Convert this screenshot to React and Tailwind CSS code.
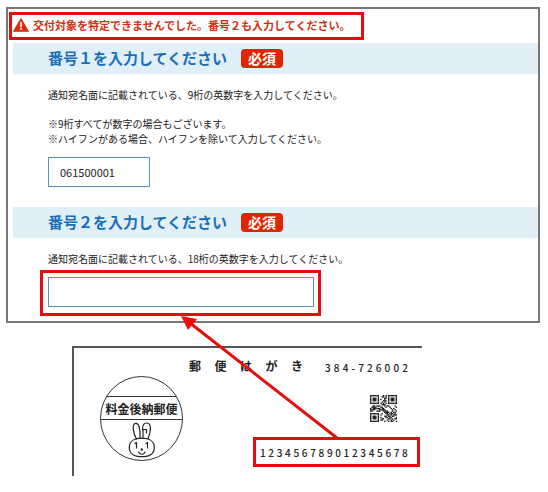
import React from "react";

const JP = "font-['Noto_Sans_CJK_JP',sans-serif]";

const QR_ROWS = [
  "111111100010101111111",
  "100000100110101000001",
  "101110100001101011101",
  "101110101001001011101",
  "101110100011101011101",
  "100000100101001000001",
  "111111101010101111111",
  "000000000111000000000",
  "001101110001011000010",
  "011110001100100100001",
  "101111110110000010100",
  "111100011111000001010",
  "110001110011110001001",
  "000000000001111010110",
  "111111100100110111010",
  "100000101000011010111",
  "101110100001101101100",
  "101110101000110110001",
  "101110100110001101011",
  "100000101100010010100",
  "111111100001001011001",
];

function RequiredBadge() {
  return (
    <span className="rounded bg-[#de2700] px-[7px] text-[14px]/[19px] font-bold text-white">必須</span>
  );
}

function SectionHeading({ id, children }) {
  return (
    <div className="ml-[5px] flex h-[31px] items-center gap-[14px] bg-[#e1eff8] pb-px pl-[35px]">
      <label htmlFor={id} className="text-[15px]/[20px] font-bold text-[#1a6fb8]">
        {children}
      </label>
      <RequiredBadge />
    </div>
  );
}

function SpacedText({ text, className }) {
  return (
    <p className={"flex justify-between " + className}>
      {text.split("").map((c, i) => (
        <span key={i}>{c}</span>
      ))}
    </p>
  );
}

function WarningIcon() {
  return (
    <svg viewBox="0 0 16 14" className="h-[14px] w-4 shrink-0" aria-hidden="true">
      <path d="M8 .8 15.3 13.2H.7Z" fill="#d32f10" stroke="#d32f10" strokeWidth="1.2" strokeLinejoin="round" />
      <path d="M8 4.6v4.2" stroke="#fff" strokeWidth="1.5" strokeLinecap="round" />
      <circle cx="8" cy="11" r=".9" fill="#fff" />
    </svg>
  );
}

function Stamp() {
  return (
    <div className="relative h-[85px] w-[83px] pt-6">
      <svg viewBox="0 0 83 85" className="absolute inset-0 size-full" fill="none" stroke="#333" aria-hidden="true">
        <ellipse cx="41.5" cy="42.5" rx="41" ry="42" />
        <path d="M6.5 20.5h70M.5 43.5h82" />
        <g stroke="#222" strokeWidth="1.2" strokeLinecap="round" strokeLinejoin="round">
          <path d="M36.5 63c-3.5-6-4.5-14-1.5-15.500 4-1.500 5.500 6 5 14.500" />
          <path d="M43 62v-8.500h3.500v3.500M42.500 53.500c0-4 1-6.500 4-6.500 5.500 0 4.500 9 1.500 15.800" />
          <path d="M41.800 62.200c8 0 12.500 3.500 12.500 9 0 6-4.500 9.500-12.500 9.500s-12.500-3.500-12.500-9.500c0-5.500 4.500-9 12.500-9Z" />
          <path d="M35 67.500l1.500-1v5.500M46 67.500l1.500-1v5.500M38.500 76c1.500 3 5.500 3 6.500 0" />
          <circle cx="41.800" cy="73.500" r=".6" fill="#222" />
        </g>
      </svg>
      <p className="relative text-center text-[12px]/[17px] font-bold text-[#222]">料金後納郵便</p>
    </div>
  );
}

function QrCode() {
  return (
    <svg viewBox="0 0 21 21" className="size-[27px]" role="img" aria-label="QR">
      {QR_ROWS.map((row, y) =>
        row.split("").map((m, x) =>
          m === "1" ? <rect key={x + "-" + y} x={x} y={y} width="1.05" height="1.05" fill="#111" /> : null
        )
      )}
    </svg>
  );
}

export default function App() {
  return (
    <main className={"relative bg-white pt-[7px] pr-2 pb-4 pl-[6px] text-[#222] " + JP}>
      {/* Formulario */}
      <form className="border-2 border-[#777] pb-[5px]">
        <div className="ml-px mt-[3px] flex h-7 w-fit items-center gap-1 border-3 border-[#e60d0d] pr-[11px] pb-[2px] pl-px">
          <WarningIcon />
          <p role="alert" className="text-[11px]/[16px] font-bold text-[#d32f10]">
            交付対象を特定できませんでした。番号２も入力してください。
          </p>
        </div>

        <div className="mt-[3px]">
          <SectionHeading id="number1">番号１を入力してください</SectionHeading>
          <div className="pt-[13px] pl-10 text-[10px]/[15px]">
            <p>通知宛名面に記載されている、9桁の英数字を入力してください。</p>
            <p className="mt-[14px]">※9桁すべてが数字の場合もございます。</p>
            <p>※ハイフンがある場合、ハイフンを除いて入力してください。</p>
            <input
              id="number1"
              defaultValue="061500001"
              className="mt-[11px] block h-[30px] w-[102px] border border-[#5596c4] bg-white px-[11px] text-[11px]/[16px]"
            />
          </div>
        </div>

        <div className="mt-5">
          <SectionHeading id="number2">番号２を入力してください</SectionHeading>
          <p className="pt-[13px] pl-10 text-[10px]/[15px]">
            通知宛名面に記載されている、18桁の英数字を入力してください。
          </p>
          <div className="mt-1 ml-8 w-[281px] border-3 border-[#e60d0d] pt-1 pr-1 pb-[6px] pl-[5px]">
            <input
              id="number2"
              className="block h-[30px] w-full border border-[#5596c4] bg-white px-[11px] text-[11px]/[16px]"
            />
          </div>
        </div>
      </form>

      {/* Tarjeta postal */}
      <section className="mt-[23px] ml-[66px] flex h-[130px] w-[350px] border-t-2 border-l-2 border-[#555] pl-[26px]">
        <div className="pt-[28px]">
          <Stamp />
        </div>
        <div className="flex flex-1 flex-col pr-[2px]">
          <div className="flex items-start justify-between pr-3 pl-[6px]">
            <SpacedText text="郵便はがき" className="mt-[9px] w-[114px] text-[12px]/[18px] font-bold" />
            <SpacedText text="384-726002" className="mt-3 w-[83px] text-[10px]/[15px] font-medium" />
          </div>
          <div className="mt-5 mr-[23px] self-end">
            <QrCode />
          </div>
          <div className="mt-[15px] flex h-[30px] w-[167px] items-center self-end border-3 border-[#e60d0d] pr-[9px] pl-[4px]">
            <SpacedText text="123456789012345678" className="w-full text-[10px]/[15px] font-medium" />
          </div>
        </div>
      </section>

      {/* Flecha de la tarjeta al campo */}
      <svg viewBox="0 0 158 124" className="pointer-events-none absolute top-[315px] left-[180px] h-[124px] w-[158px]" aria-hidden="true">
        <path d="M157 123 10 8" stroke="#e60d0d" strokeWidth="3" />
        <path d="M1 1 17 4 8 15Z" fill="#f00d0d" />
      </svg>
    </main>
  );
}
